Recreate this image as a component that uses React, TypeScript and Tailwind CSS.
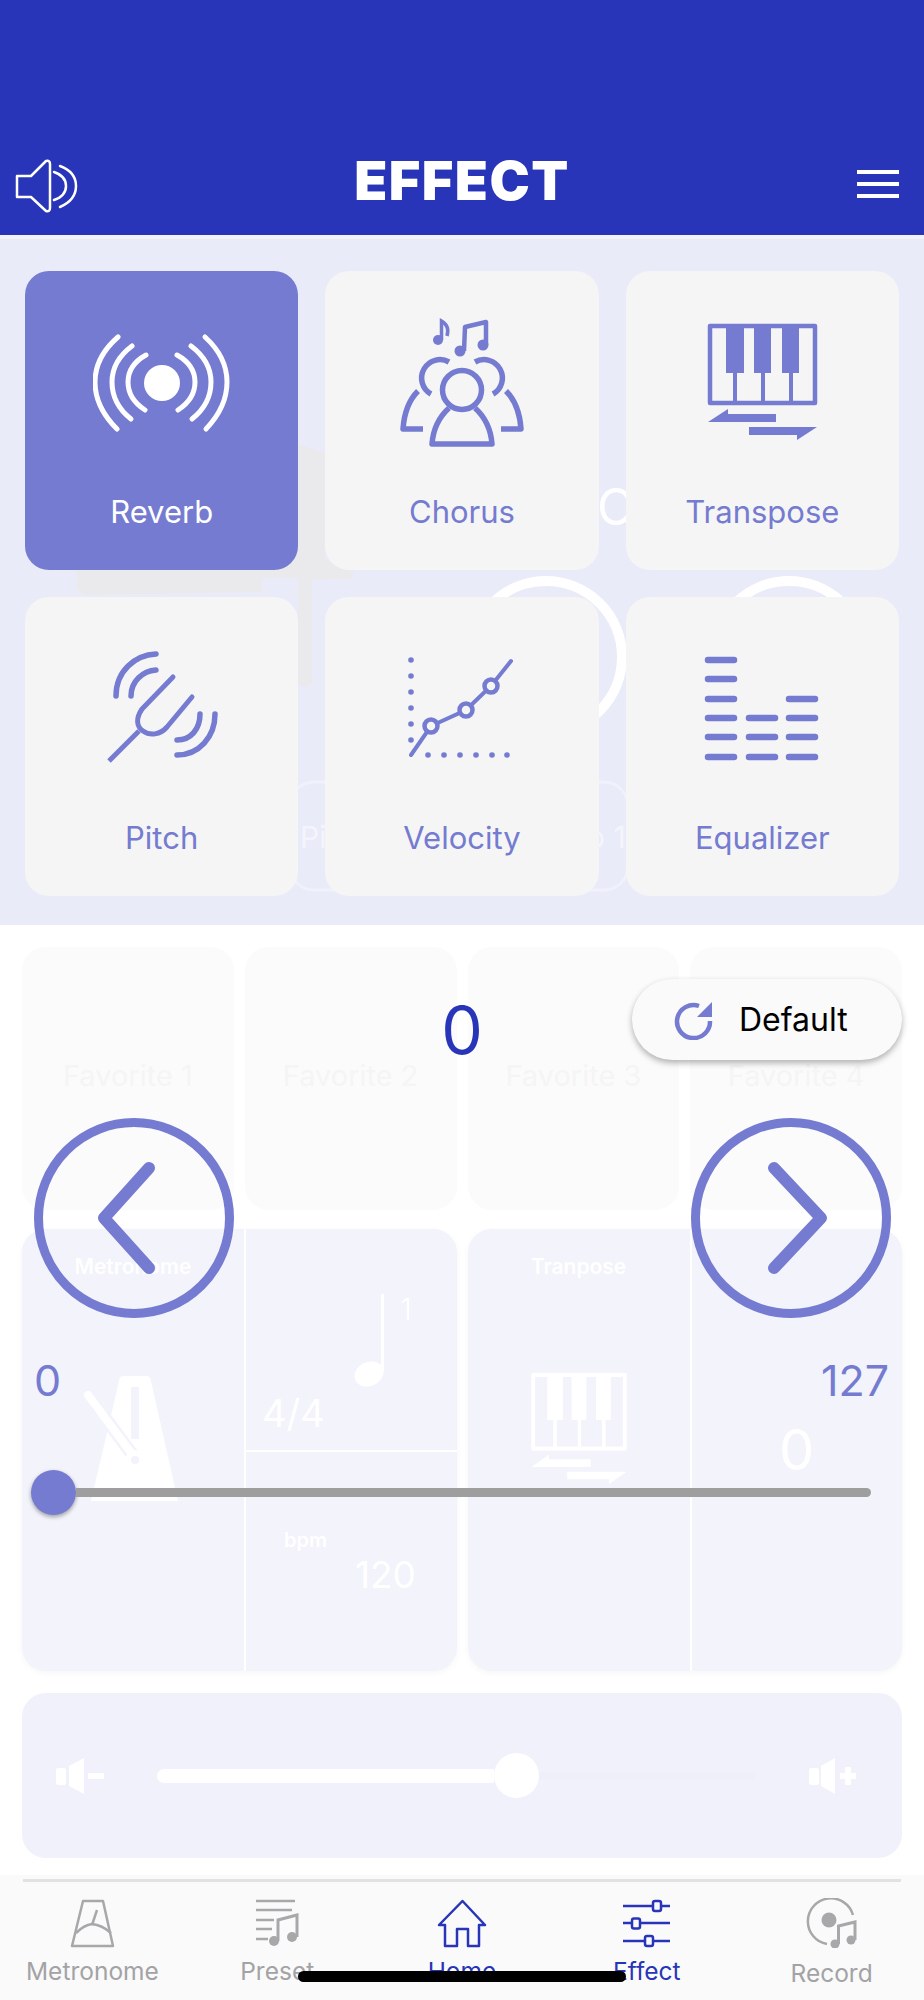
import React from 'react';

const BLUE = '#2835b8';
const ACCENT = '#747bd0';
const NAV_GRAY = '#a8a8ab';

const ReverbIcon = ({ color }: { color: string }) => (
	<svg width="138" height="102" viewBox="93 330 138 102" fill="none" stroke={color} strokeWidth="5" strokeLinecap="round">
		<circle cx="162" cy="382" r="18" fill={color} stroke="none" />
		<path d="M146 354Q128 364 128 381Q128 398 145 409" />
		<path d="M132 345Q112 360 112 381Q112 403 131 418" />
		<path d="M118 336Q95 356 95 381Q95 406 117 428" />
		<path d="M177 354Q195 364 195 381Q195 398 178 409" />
		<path d="M191 345Q211 360 211 381Q211 403 192 418" />
		<path d="M205 336Q227 356 227 381Q227 406 206 428" />
	</svg>
);

const ChorusIcon = ({ color }: { color: string }) => (
	<svg width="128" height="132" viewBox="398 315 128 132" fill="none" stroke={color} strokeWidth="5.500">
		<circle cx="462" cy="389" r="19.500" />
		<path d="M449 407C438 417 433 430 432 443H492C491 430 486 417 475 407" strokeLinejoin="round" />
		<path d="M449 361A18 18 0 1 0 431 393" />
		<path d="M475 361A18 18 0 1 1 493 393" />
		<path d="M418 390C408 400 404 414 403 428H423" strokeLinejoin="round" />
		<path d="M506 390C516 400 520 414 521 428H501" strokeLinejoin="round" />
		<circle cx="460" cy="350" r="5.500" fill={color} stroke="none" />
		<circle cx="483" cy="344" r="5.500" fill={color} stroke="none" />
		<path d="M464 350L465 326L486 321V344" strokeWidth="4.500" strokeLinejoin="round" />
		<circle cx="438" cy="339" r="5" fill={color} stroke="none" />
		<path d="M441.500 339V320Q450 325 447 335" strokeWidth="3.500" />
	</svg>
);

const PianoIcon = ({ color, bg, width, height }: { color: string; bg: string; width: number; height: number }) => (
	<svg width={width} height={height} viewBox="704 320 117 123" fill={color} preserveAspectRatio="none">
		<rect x="710" y="325" width="105" height="77" fill={bg} stroke={color} strokeWidth="4.500" strokeLinejoin="round" />
		<rect x="726" y="324" width="18" height="48" />
		<rect x="754" y="324" width="17" height="48" />
		<rect x="782" y="324" width="17" height="48" />
		<rect x="733" y="372" width="4" height="31" />
		<rect x="761" y="372" width="4" height="31" />
		<rect x="789" y="372" width="4" height="31" />
		<polygon points="708,421 728,408 728,413 776,413 776,421" />
		<polygon points="749,426 817,426 797,439 797,434 749,434" />
	</svg>
);

const PitchIcon = ({ color }: { color: string }) => (
	<svg width="120" height="122" viewBox="100 648 120 122" fill="none" stroke={color} strokeWidth="5" strokeLinecap="round">
		<path d="M107 762L137 732" strokeLinecap="butt" />
		<path d="M171 678L140 710C134 719 134 727 141 732C148 737 158 736 165 728L190 698" />
		<path d="M154 655C133 656 114 672 114 697" strokeWidth="5.500" />
		<path d="M154 671C141 672 129 682 129 697" strokeWidth="5.500" />
		<path d="M213 715C213 738 197 756 175 756" strokeWidth="5.500" />
		<path d="M198 715C198 730 189 741 175 741" strokeWidth="5.500" />
	</svg>
);

const VelocityIcon = ({ color, bg }: { color: string; bg: string }) => (
	<svg width="115" height="108" viewBox="405 655 115 108" fill={color}>
		{[661, 677, 693, 709, 725, 741].map((y) => (
			<circle key={y} cx="412" cy={y} r="2.800" />
		))}
		{[429, 445, 461, 477, 493, 508].map((x) => (
			<circle key={x} cx={x} cy="756" r="2.800" />
		))}
		<path d="M412 756L432 727L467 711L492 687L512 662" fill="none" stroke={color} strokeWidth="4" strokeLinecap="round" />
		<circle cx="432" cy="727" r="6.500" fill={bg} stroke={color} strokeWidth="4.500" />
		<circle cx="467" cy="711" r="6.500" fill={bg} stroke={color} strokeWidth="4.500" />
		<circle cx="492" cy="687" r="6.500" fill={bg} stroke={color} strokeWidth="4.500" />
	</svg>
);

const EqualizerIcon = ({ color }: { color: string }) => {
	const bars = [
		{ x: 709, ys: [660, 679, 699, 718, 737, 757] },
		{ x: 750, ys: [718, 737, 757] },
		{ x: 790, ys: [699, 718, 737, 757] },
	];
	return (
		<svg width="126" height="113" viewBox="700 652 126 113" fill="none" stroke={color} strokeWidth="6.500" strokeLinecap="round">
			{bars.map((b) =>
				b.ys.map((y) => <path key={`${b.x}-${y}`} d={`M${b.x} ${y}H${b.x + 26}`} />),
			)}
		</svg>
	);
};

const effects = [
	{ label: 'Reverb', icon: ReverbIcon, active: true },
	{ label: 'Chorus', icon: ChorusIcon },
	{ label: 'Transpose', icon: null },
	{ label: 'Pitch', icon: PitchIcon },
	{ label: 'Velocity', icon: null },
	{ label: 'Equalizer', icon: EqualizerIcon },
];

const EffectCard = ({ label, icon: IconComp, active }: any) => {
	const color = active ? '#ffffff' : ACCENT;
	return (
		<div className={`flex h-[299px] flex-col items-center rounded-[24px] ${active ? 'bg-[#747bd0]' : 'bg-[#f5f5f5]'}`}>
			<div className="mt-[21px] flex h-[180px] items-center justify-center">
				{label === 'Transpose' && <PianoIcon color={color} bg="#f5f5f5" width={117} height={123} />}
				{label === 'Velocity' && <VelocityIcon color={color} bg="#f5f5f5" />}
				{IconComp && <IconComp color={color} />}
			</div>
			<span className={`mt-[20px] h-[40px] text-[31px] leading-[40px] ${active ? 'text-white' : 'text-[#747bd0]'}`}>{label}</span>
		</div>
	);
};

// what shows through the effect sheet: the home page behind it
const GhostLayer = () => (
	<>
		<svg className="absolute inset-0" width="924" height="686" viewBox="0 239 924 686" fill="none">
			<path d="M77 500L298 444L325 453V560L353 570V578L312 580V682Q305 692 298 682V578H262V592L90 595Q77 595 77 585Z" fill="#eaeaec" />
			<circle cx="546" cy="657" r="76" stroke="#ffffff" strokeWidth="10" />
			<circle cx="789" cy="657" r="76" stroke="#ffffff" strokeWidth="10" />
			<rect x="290" y="782" width="338" height="108" rx="24" stroke="#f0f1fa" strokeWidth="3" />
		</svg>
		<span className="absolute left-[597px] top-[238px] text-[50px] leading-[60px] text-white">O</span>
		<span className="absolute left-[300px] top-[578px] text-[30px] leading-[40px] text-[#f4f5fc]">Pi</span>
		<span className="absolute left-[587px] top-[578px] text-[30px] leading-[40px] text-[#f4f5fc]">o 1</span>
	</>
);

const GhostMetronome = () => (
	<svg width="100" height="132" viewBox="85 1370 100 132" fill="none">
		<path d="M121 1378Q121 1373 126 1373H148Q153 1373 153 1378L180 1498H93Z" fill="#ffffff" />
		<rect x="133" y="1384" width="8" height="52" fill="#f2f3fb" />
		<path d="M90 1392L137 1455" stroke="#f2f3fb" strokeWidth="13" />
		<path d="M90 1392L137 1455" stroke="#ffffff" strokeWidth="8" strokeLinecap="round" />
		<ellipse cx="137" cy="1457" rx="10" ry="10" fill="#ffffff" />
		<ellipse cx="137" cy="1457" rx="4" ry="4" fill="#f2f3fb" />
	</svg>
);

const VolumeDown = () => (
	<svg width="50" height="38" viewBox="55 1756 50 38" fill="#ffffff">
		<rect x="56" y="1767" width="10" height="17" rx="2" />
		<polygon points="69,1765 84,1757 84,1793 69,1785" />
		<rect x="88" y="1772" width="16" height="6" />
	</svg>
);

const VolumeUp = () => (
	<svg width="50" height="38" viewBox="808 1756 50 38" fill="#ffffff">
		<rect x="810" y="1767" width="10" height="17" rx="2" />
		<polygon points="822,1765 836,1757 836,1793 822,1785" />
		<rect x="841" y="1772" width="16" height="6" />
		<rect x="846" y="1766" width="6" height="18" />
	</svg>
);

const NavMetronome = () => (
	<svg width="60" height="50" viewBox="62 1898 60 50" fill="none" stroke={NAV_GRAY} strokeWidth="2.500" strokeLinejoin="round">
		<path d="M83 1901H103L113 1946H72Z" />
		<path d="M76 1933Q84 1925 92 1924Q102 1925 111 1933" />
		<path d="M92 1925L97 1910" />
	</svg>
);

const NavPreset = () => (
	<svg width="60" height="50" viewBox="247 1898 60 50" fill="none" stroke={NAV_GRAY} strokeWidth="2.500">
		<path d="M256 1901H295M256 1910H292M256 1920H274M256 1929H272M256 1939H268" />
		<circle cx="274" cy="1941" r="5" fill={NAV_GRAY} stroke="none" />
		<circle cx="292" cy="1937" r="5" fill={NAV_GRAY} stroke="none" />
		<path d="M278 1941V1920L297 1915V1937" strokeWidth="3" />
	</svg>
);

const NavHome = () => (
	<svg width="60" height="50" viewBox="432 1898 60 50" fill="none" stroke={BLUE} strokeWidth="2.500" strokeLinejoin="round">
		<path d="M462.500 1901L439 1925H445V1946H457V1929H468V1946H479V1925H485Z" />
	</svg>
);

const NavEffect = () => (
	<svg width="60" height="50" viewBox="617 1898 60 50" fill="none" stroke={BLUE} strokeWidth="2.500">
		<path d="M623 1906H670M623 1923H670M623 1941H670" />
		<rect x="653" y="1901" width="8" height="10" rx="2" fill="#fafafa" />
		<rect x="632" y="1918.500" width="8" height="10" rx="2" fill="#fafafa" />
		<rect x="645" y="1936" width="8" height="10" rx="2" fill="#fafafa" />
	</svg>
);

const NavRecord = () => (
	<svg width="60" height="50" viewBox="802 1898 60 50" fill="none" stroke={NAV_GRAY} strokeWidth="2.500">
		<path d="M853 1915A23 23 0 1 0 827 1944" />
		<circle cx="829" cy="1920" r="7.500" fill={NAV_GRAY} stroke="none" />
		<circle cx="835" cy="1944" r="4.500" fill={NAV_GRAY} stroke="none" />
		<circle cx="851" cy="1940" r="4.500" fill={NAV_GRAY} stroke="none" />
		<path d="M838.500 1944V1926L855 1922V1940" strokeWidth="3" />
	</svg>
);

const navItems = [
	{ label: 'Metronome', icon: <NavMetronome /> },
	{ label: 'Preset', icon: <NavPreset /> },
	{ label: 'Home', icon: <NavHome />, on: true },
	{ label: 'Effect', icon: <NavEffect />, on: true },
	{ label: 'Record', icon: <NavRecord /> },
];

const App = () => {
	return (
		<div className="relative h-[2000px] w-[924px] overflow-hidden bg-white font-[Inter,'Noto_Sans',sans-serif]">
			{/* header */}
			<div className="grid h-[235px] grid-cols-[1fr_auto_1fr] items-center bg-[#2835b8] pl-[14px] pr-[25px] pt-[141px] pb-[14px]">
				<svg className="mt-[10px]" width="65" height="56" viewBox="14 158 65 56" fill="none" stroke="#ffffff" strokeWidth="2.500" strokeLinejoin="round" strokeLinecap="round">
					<path d="M17 176H31L46 161Q50 160 50 164V208Q50 212 46 211L31 197H17Z" />
					<path d="M54 172Q66 176 66 186Q66 196 54 200" />
					<path d="M60 166Q76 172 76 186Q76 200 60 207" />
				</svg>
				<h1 className="ml-[11px] text-[54px] leading-[60px] font-black tracking-[1.500px] text-white">EFFECT</h1>
				<div className="mt-[5px] flex flex-col gap-[8px] justify-self-end">
					<div className="h-[4px] w-[42px] bg-white" />
					<div className="h-[4px] w-[42px] bg-white" />
					<div className="h-[4px] w-[42px] bg-white" />
				</div>
			</div>
			<div className="h-[4px] bg-[#f3f4fb]" />

			{/* effect sheet */}
			<div className="relative h-[686px] bg-[#e9ebf8]">
				<GhostLayer />
				<div className="relative grid grid-cols-3 gap-x-[27px] gap-y-[27px] px-[25px] pt-[32px]">
					{effects.map((e) => (
						<EffectCard key={e.label} {...e} />
					))}
				</div>
			</div>

			{/* faded home page below the sheet */}
			<div className="relative h-[950px]">
				<div className="px-[22px] pt-[22px]">
					<div className="grid grid-cols-4 gap-x-[11px]">
						{['Favorite 1', 'Favorite 2', 'Favorite 3', 'Favorite 4'].map((f) => (
							<div key={f} className="flex h-[263px] justify-center rounded-[24px] bg-[#fbfbfb] pt-[110px] text-[29px] leading-[38px] text-[#f5f5f5]">
								{f}
							</div>
						))}
					</div>

					<div className="mt-[19px] grid grid-cols-2 gap-x-[11px]">
						<div className="grid h-[442px] grid-cols-[224px_1fr] overflow-hidden rounded-[24px] bg-[#f2f3fb] shadow-[0_2px_6px_rgba(0,0,0,0.04)]">
							<div className="flex flex-col items-center border-r-2 border-white pt-[23px]">
								<span className="text-[21px] leading-[30px] font-semibold text-white">Metronome</span>
								<div className="mt-[91px]">
									<GhostMetronome />
								</div>
							</div>
							<div className="flex flex-col">
								<div className="h-[223px] border-b-2 border-white pt-[64px]">
									<div className="ml-[106px] flex h-[92px] items-start">
										<svg width="36" height="94" viewBox="350 1292 36 94" fill="#ffffff">
											<rect x="379" y="1293" width="3" height="78" />
											<ellipse cx="367" cy="1373" rx="15" ry="12" transform="rotate(-25 367 1373)" />
										</svg>
										<span className="ml-[12px] text-[30px] leading-[32px] font-light text-white">1</span>
									</div>
									<div className="ml-[16px] mt-[6px] text-[38px] leading-[44px] text-white">4/4</div>
								</div>
								<div className="ml-[38px] mt-[76px] text-[20px] leading-[24px] font-semibold text-white">bpm</div>
								<div className="ml-[109px] mt-[3px] text-[37px] leading-[40px] text-white">120</div>
							</div>
						</div>
						<div className="grid h-[442px] grid-cols-[224px_1fr] overflow-hidden rounded-[24px] bg-[#f2f3fb] shadow-[0_2px_6px_rgba(0,0,0,0.04)]">
							<div className="flex flex-col items-center border-r-2 border-white pt-[23px]">
								<span className="text-[21px] leading-[30px] font-semibold text-white">Tranpose</span>
								<div className="mt-[88px]">
									<PianoIcon color="#ffffff" bg="#f2f3fb" width={102} height={118} />
								</div>
							</div>
							<div className="flex justify-center pt-[190px] text-[56px] leading-[62px] text-white">0</div>
						</div>
					</div>

					<div className="mt-[22px] flex h-[165px] items-center rounded-[24px] bg-[#f0f1fb] pl-[33px] pr-[45px]">
						<VolumeDown />
						<div className="ml-[52px] mr-[51px] flex flex-1 items-center">
							<div className="h-[14px] w-[337px] rounded-l-full bg-white" />
							<div className="h-[45px] w-[45px] rounded-full bg-white" />
							<div className="h-[8px] flex-1 rounded-r-full bg-[#eeeff9]" />
						</div>
						<VolumeUp />
					</div>
				</div>

				{/* controls over the faded page */}
				<div className="absolute left-1/2 top-[65px] -translate-x-1/2 text-[66px] leading-[80px] text-[#2835b8]">0</div>

				<div className="absolute left-[632px] top-[54px] flex h-[81px] w-[270px] items-center rounded-full bg-[#fafafa] pl-[42px] shadow-[0_3px_6px_rgba(0,0,0,0.3)]">
					<svg width="40" height="40" viewBox="675 1000 40 40" fill="none">
						<path d="M711 1021A16.500 16.500 0 1 1 700 1006" stroke={ACCENT} strokeWidth="4.500" />
						<polygon points="713,1002 713,1017 698,1017" fill={ACCENT} />
					</svg>
					<span className="ml-[25px] text-[32px] leading-[40px] text-black">Default</span>
				</div>

				<div className="absolute left-[34px] top-[193px] flex h-[200px] w-[200px] items-center justify-center rounded-full border-[9px] border-[#747bd0]">
					<svg className="mr-[10px]" width="70" height="120" viewBox="95 1158 70 120" fill="none" stroke={ACCENT} strokeWidth="12" strokeLinecap="round" strokeLinejoin="round">
						<path d="M150 1168L105 1218L150 1268" />
					</svg>
				</div>
				<div className="absolute left-[691px] top-[193px] flex h-[200px] w-[200px] items-center justify-center rounded-full border-[9px] border-[#747bd0]">
					<svg className="ml-[15px]" width="70" height="120" viewBox="764 1158 70 120" fill="none" stroke={ACCENT} strokeWidth="12" strokeLinecap="round" strokeLinejoin="round">
						<path d="M774 1168L821 1218L774 1268" />
					</svg>
				</div>

				<div className="absolute left-[34px] top-[430px] text-[43px] leading-[50px] text-[#747bd0]">0</div>
				<div className="absolute right-[35px] top-[430px] text-[43px] leading-[50px] text-[#747bd0]">127</div>

				<div className="absolute left-[31px] top-[545px] flex w-[840px] items-center">
					<div className="h-[45px] w-[45px] shrink-0 rounded-full bg-[#747bd0] shadow-[0_2px_4px_rgba(0,0,0,0.35)]" />
					<div className="h-[9px] flex-1 rounded-r-full bg-[#9e9e9e]" />
				</div>
			</div>

			{/* tab bar */}
			<div className="absolute inset-x-0 bottom-0 h-[125px] bg-[#fafafa] pt-[4px]">
				<div className="mx-[23px] h-[3px] bg-[#e2e2e2]" />
				<div className="grid grid-cols-5 pt-[16px]">
					{navItems.map((n) => (
						<div key={n.label} className="flex flex-col items-center">
							{n.icon}
							<span className={`${n.label === 'Record' ? 'mt-[10px]' : 'mt-[8px]'} text-[24.500px] leading-[30px] ${n.on ? 'text-[#2835b8]' : 'text-[#a3a3a6]'}`}>{n.label}</span>
						</div>
					))}
				</div>
			</div>
			<div className="absolute left-[298px] top-[1971px] h-[11px] w-[328px] rounded-full bg-black" />
		</div>
	);
};

export default App;
